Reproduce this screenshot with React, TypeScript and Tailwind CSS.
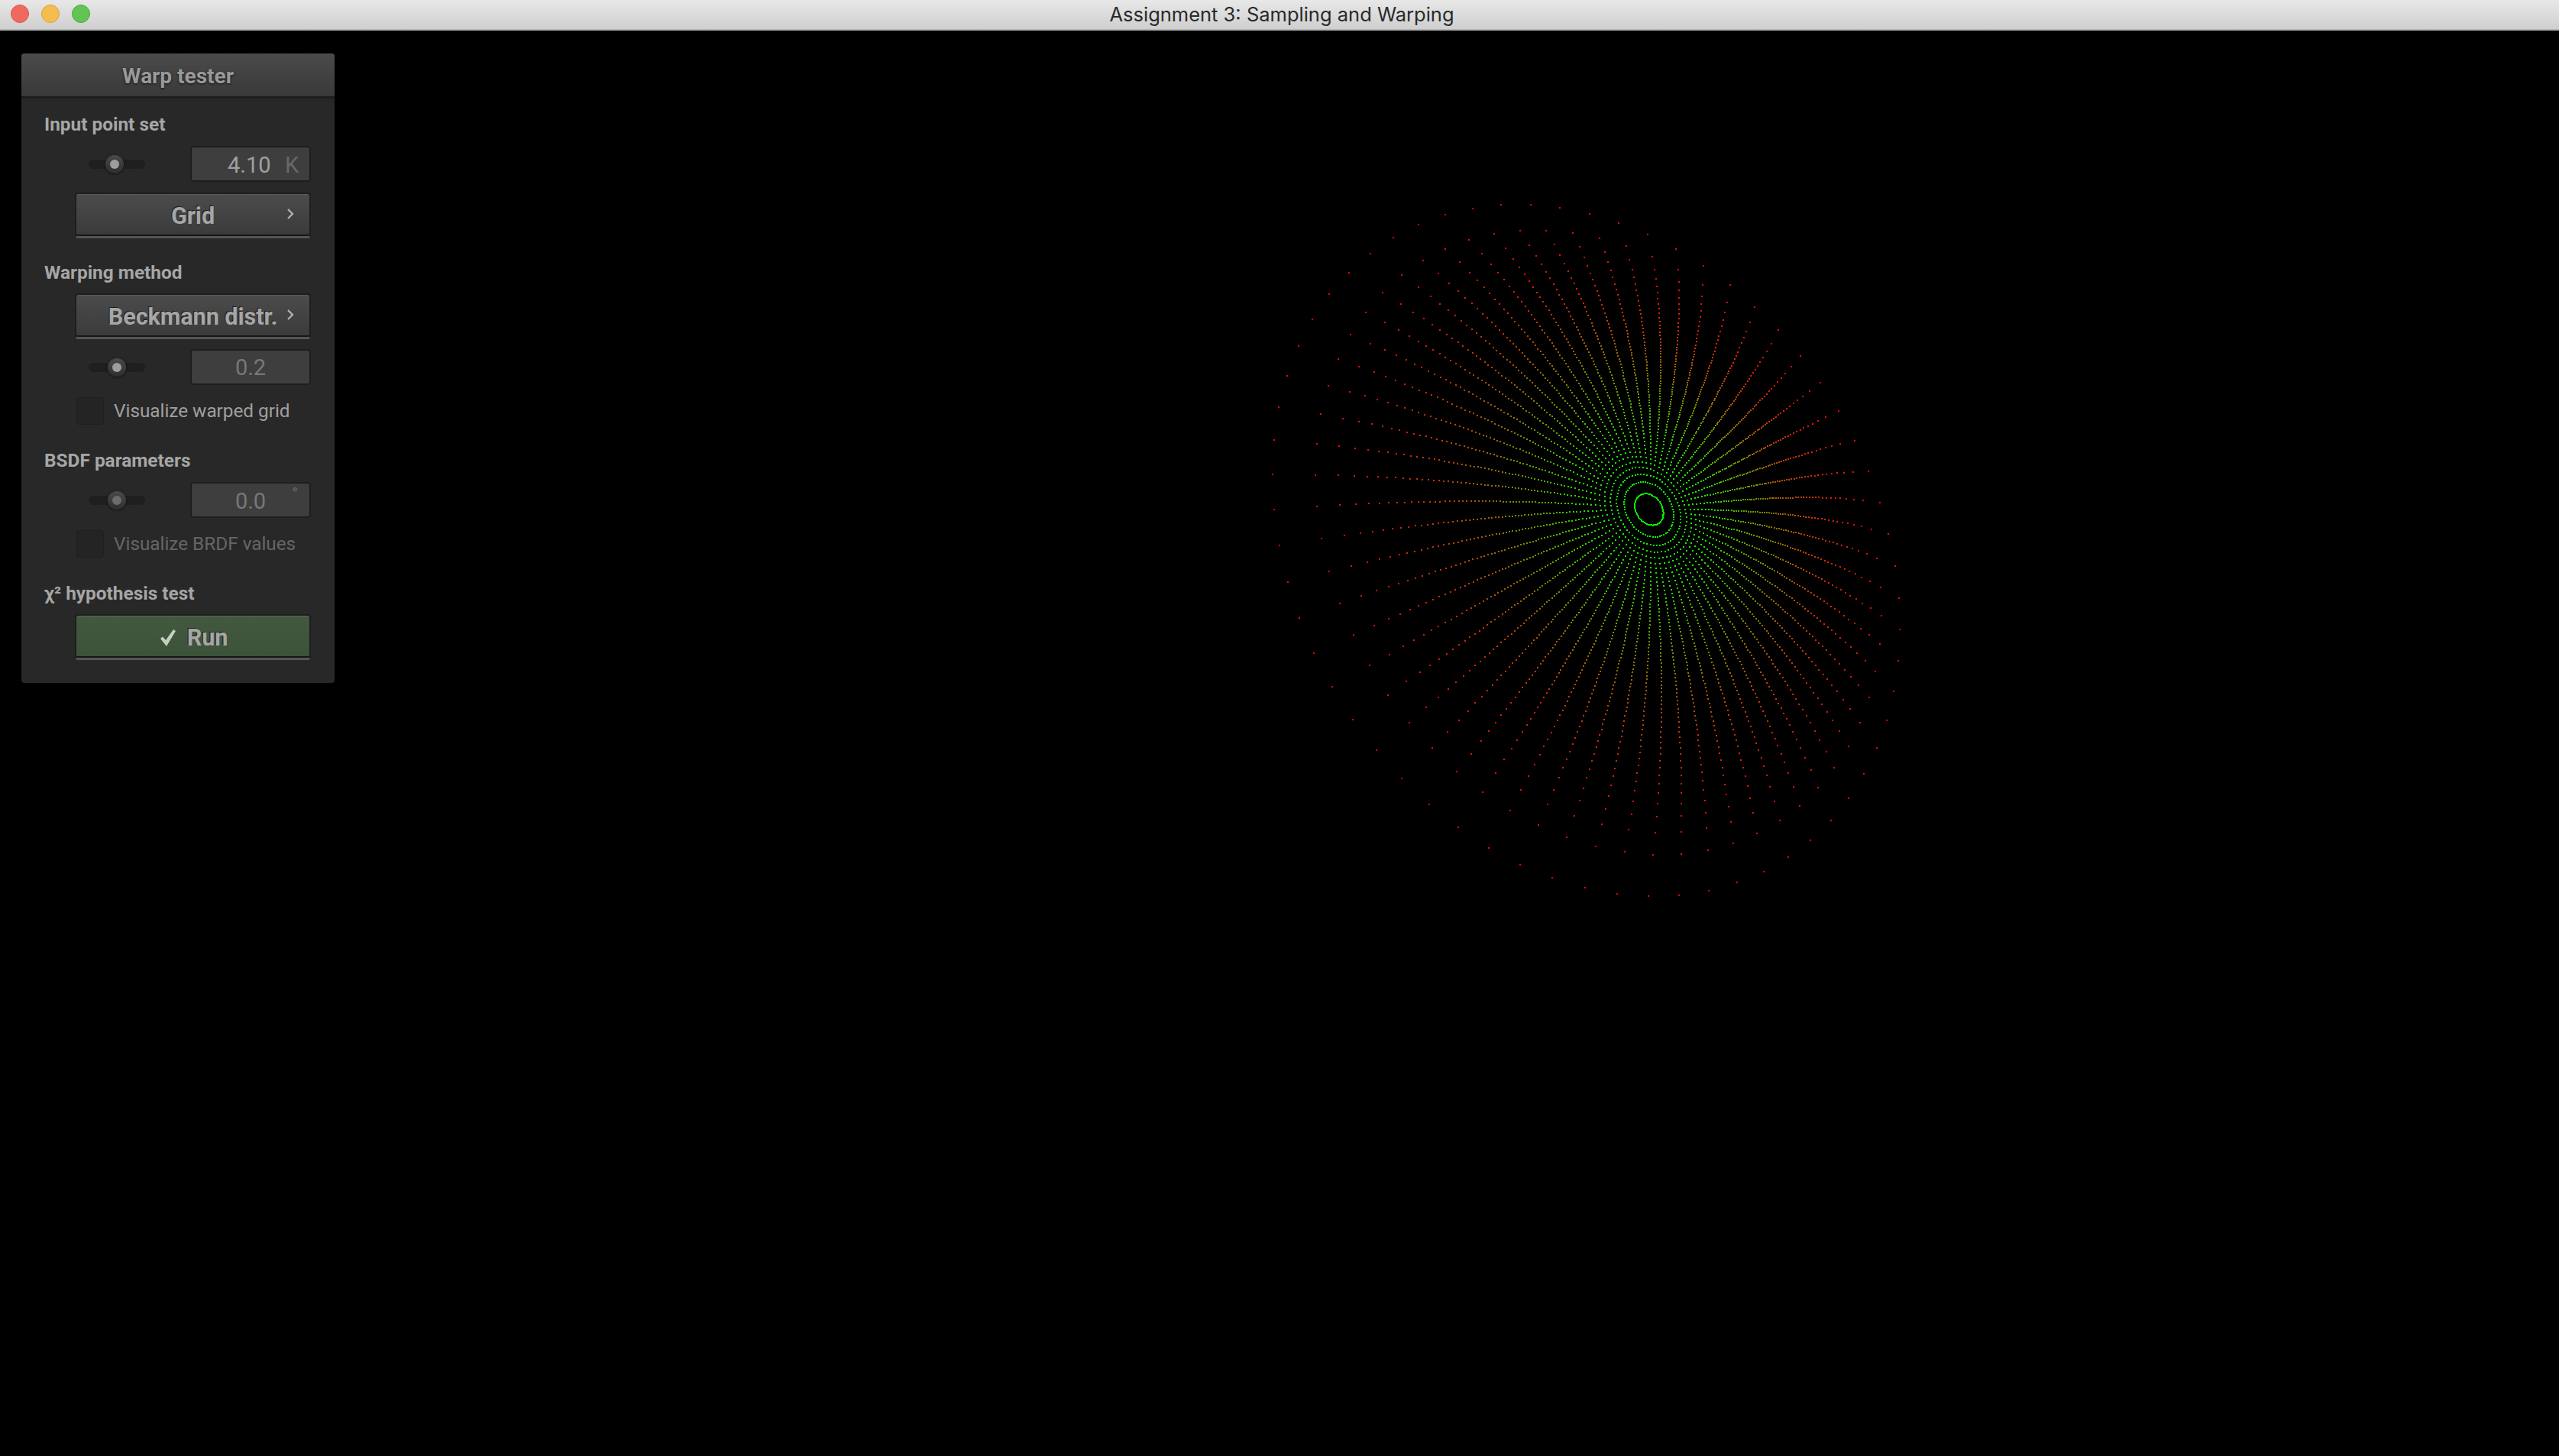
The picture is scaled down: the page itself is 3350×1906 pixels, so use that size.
import React from "react";

type P = number[];
const PARAMS: P = [3648.4952, 4.1074, 0.5194, 0.5761, 0.9702, 1670.5595, 984.0998, 0.222];
function proj(p: P, hand: number, i: number, j: number) {
  const [F, DC, S, AL, GA, cx, cy, BA] = p;
  const cosB = Math.sqrt(Math.max(0, 1 - S * S));
  const n = [S * Math.cos(AL), S * Math.sin(AL), cosB];
  const a = [-Math.sin(AL), Math.cos(AL), 0];
  const b = [n[1] * a[2] - n[2] * a[1], n[2] * a[0] - n[0] * a[2], n[0] * a[1] - n[1] * a[0]];
  const u = (i + 0.5) / 64, v = (j + 0.5) / 64;
  const phi = hand * 2 * Math.PI * u + GA;
  const t2 = -BA * BA * Math.log(1 - v);
  const cz = 1 / Math.sqrt(1 + t2);
  const s = Math.sqrt(1 - cz * cz);
  const lx = s * Math.cos(phi), ly = s * Math.sin(phi);
  const wx = a[0] * lx + b[0] * ly + n[0] * cz;
  const wy = a[1] * lx + b[1] * ly + n[1] * cz;
  const wz = a[2] * lx + b[2] * ly + n[2] * cz - DC;
  return [cx + (F * wx) / -wz, cy - (F * wy) / -wz];
}

function points() {
  const out: { x: number; y: number; c: string }[] = [];
  for (let i = 0; i < 64; i++) {
    for (let j = 0; j < 64; j++) {
      const q = proj(PARAMS, -1, i, j);
      const v = (j + 0.5) / 64;
      const r = Math.round(255 * v), g = 255 - r;
      out.push({ x: Math.round(q[0]) - 1, y: Math.round(q[1]) - 1, c: `rgb(${r},${g},0)` });
    }
  }
  return out;
}
const pts = points();

function Chevron() {
  return (
    <svg width="10" height="16" viewBox="0 0 10 16" className="absolute right-[20px] top-[17px]">
      <path d="M2 2 L8 8 L2 14" fill="none" stroke="#b4b4b4" strokeWidth="2.2" />
    </svg>
  );
}

function Btn({ label, green, check, chevron, top }: { label: string; green?: boolean; check?: boolean; chevron?: boolean; top: string }) {
  return (
    <div className={`ml-[70px] mr-[31px] ${top} rounded-[4px] border-x-2 border-t-2 border-b-[3px] border-t-[#1e1e1e] border-x-[#1e1e1e] border-b-[#555]`}>
      <div className={`relative h-[55px] pt-[3px] rounded-[3px] flex items-center justify-center border-t border-b-2 border-b-[#161616] ${green ? "pl-[3px] bg-gradient-to-b from-[#42593f] to-[#3c5339] border-t-[#5a6e57]" : "bg-gradient-to-b from-[#4b4b4b] to-[#3b3b3b] border-t-[#5a5a5a]"} text-[30.5px] font-bold text-[#a6a6a6] [text-shadow:-1px_-1px_0_#1c1c1c]`}>
        {check && (
          <svg width="20" height="22" viewBox="0 0 20 22" className="mr-[15px]">
            <path d="M0 12 L3 9.5 L7 14 L17 0 L20 2 L8 22 Z" fill="#c4cfc2" />
          </svg>
        )}
        <span>{label}</span>
        {chevron && <Chevron />}
      </div>
    </div>
  );
}

function Label({ children, top }: { children: React.ReactNode; top: string }) {
  return <div className={`ml-[30px] ${top} h-[32px] leading-[32px] text-[24.4px] font-bold text-[#a6a6a6]`}>{children}</div>;
}

function SliderRow({ top, knob, dim, children }: { top: string; knob: string; dim?: boolean; children: React.ReactNode }) {
  return (
    <div className={`ml-[70px] mr-[31px] ${top} flex items-center h-[47px]`}>
      <div className="w-[151px] flex items-center pl-[18px]">
        <div className="relative w-[74px] h-[12px] rounded-full bg-[#1f1f1f]">
          <div className={`absolute ${knob} top-[-6px] w-[24px] h-[24px] rounded-full bg-gradient-to-b from-[#4a4a4a] to-[#2e2e2e] shadow-[0_1px_3px_#111] flex items-center justify-center`}>
            <div className={`w-[12px] h-[12px] rounded-full ${dim ? "bg-[#6b6b6b]" : "bg-[#9e9e9e]"}`} />
          </div>
        </div>
      </div>
      <div className="relative flex-1 h-[47px] rounded-[4px] border-2 border-[#1e1e1e] bg-[#3e3e3e] text-[29px] text-[#a0a0a0]">
        {children}
      </div>
    </div>
  );
}

function Check({ label, dim, top }: { label: string; dim?: boolean; top: string }) {
  return (
    <div className={`ml-[72px] ${top} flex items-center h-[36px]`}>
      <div className="w-[36px] h-[36px] rounded-[4px] border border-[#1e1e1e] bg-[#242424]" />
      <span className={`ml-[13px] text-[24.3px] ${dim ? "text-[#666666]" : "text-[#a0a0a0]"}`}>{label}</span>
    </div>
  );
}

export default function App() {
  return (
    <div className="w-[3350px] h-[1906px] bg-black flex flex-col overflow-hidden font-['Roboto',sans-serif]">
      <div className="relative h-[40px] shrink-0 bg-gradient-to-b from-[#e8e8e8] to-[#cfcfcf] border-b-2 border-b-[#b5b5b5] flex items-center justify-center pl-[6px]">
        <div className="absolute left-[14px] top-[6px] flex gap-[16px]">
          <div className="w-[24px] h-[24px] rounded-full bg-[#ee6a5f] border border-[#d9574d]" />
          <div className="w-[24px] h-[24px] rounded-full bg-[#f5bd4f] border border-[#dea13b]" />
          <div className="w-[24px] h-[24px] rounded-full bg-[#61c454] border border-[#4fa944]" />
        </div>
        <span className="text-[25.5px] text-[#2a2a2a] font-['Inter',sans-serif]">Assignment 3: Sampling and Warping</span>
      </div>
      <div className="relative flex-1">
        <svg width="3350" height="1866" viewBox="0 40 3350 1866" className="absolute left-0 top-0">
          {pts.map((p, i) => (
            <rect key={i} x={p.x} y={p.y} width="2" height="2" fill={p.c} shapeRendering="crispEdges" />
          ))}
        </svg>
        <div className="relative ml-[28px] mt-[30px] w-[410px] h-[824px] rounded-[4px] bg-[#282828] flex flex-col">
          <div className="h-[59px] pt-[3px] shrink-0 rounded-t-[4px] bg-gradient-to-b from-[#4b4b4b] to-[#393939] border-b-[3px] border-b-[#1d1d1d] flex items-center justify-center text-[28px] font-bold text-[#999999] [text-shadow:0_1px_3px_#111]">
            Warp tester
          </div>
          <Label top="mt-[18px]">Input point set</Label>
          <SliderRow top="mt-[12px]" knob="left-[22px]">
            <span className="absolute left-[47px] top-[6px] leading-[34px]">4.10</span>
            <span className="absolute left-[122px] top-[6px] leading-[34px] text-[#686868]">K</span>
          </SliderRow>
          <Btn top="mt-[14px]" label="Grid" chevron />
          <Label top="mt-[29px]">Warping method</Label>
          <Btn top="mt-[11px]" label="Beckmann distr." chevron />
          <SliderRow top="mt-[13px]" knob="left-[25px]">
            <span className="absolute inset-0 pt-[3px] flex items-center justify-center text-[#777777]">0.2</span>
          </SliderRow>
          <Check top="mt-[16px]" label="Visualize warped grid" />
          <Label top="mt-[31px]">BSDF parameters</Label>
          <SliderRow top="mt-[12px]" knob="left-[25px]" dim>
            <span className="absolute inset-0 pt-[4px] flex items-center justify-center text-[#777777]">0.0</span>
            <span className="absolute left-[131px] top-[-3px] text-[22px] text-[#666666]">°</span>
          </SliderRow>
          <Check top="mt-[16px]" label="Visualize BRDF values" dim />
          <Label top="mt-[31px]">χ² hypothesis test</Label>
          <Btn top="mt-[11px]" label="Run" green check />
        </div>
      </div>
    </div>
  );
}
